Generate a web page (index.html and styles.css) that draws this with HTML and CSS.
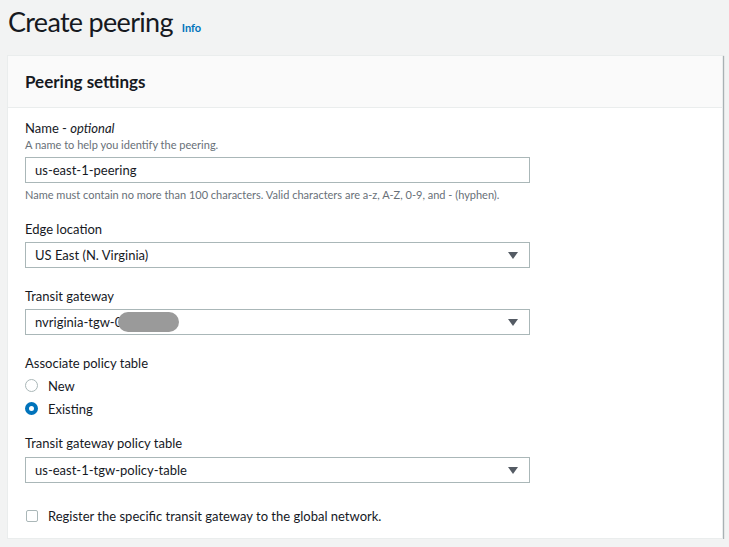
FILE: index.html
```html
<!DOCTYPE html>
<html lang="en">
<head>
    <meta charset="UTF-8" />
    <title>Create peering</title>
    <link rel="stylesheet" href="styles.css">
</head>
<body>
    <div class="page-title">
        <h1>Create peering</h1>
        <a class="info-link" href="#">Info</a>
    </div>

    <div class="panel">
        <div class="panel-header">Peering settings</div>
        <div class="panel-body">
            <!-- Name -->
            <div class="field field-first">
                <div class="field-label">Name - <i>optional</i></div>
                <div class="field-desc">A name to help you identify the peering.</div>
                <div class="input">us-east-1-peering</div>
                <div class="field-hint">Name must contain no more than 100 characters. Valid characters are a-z, A-Z, 0-9, and - (hyphen).</div>
            </div>
            <!-- Edge location -->
            <div class="field field-tight">
                <div class="field-label">Edge location</div>
                <div class="select">US East (N. Virginia)<span class="caret"></span></div>
            </div>
            <!-- Transit gateway -->
            <div class="field">
                <div class="field-label">Transit gateway</div>
                <div class="select">nvriginia-tgw-0<span class="redact"></span><span class="caret"></span></div>
            </div>
            <!-- Policy table choice -->
            <div class="field">
                <div class="field-label">Associate policy table</div>
                <div class="radio-group">
                    <div class="radio-row"><span class="radio"></span>New</div>
                    <div class="radio-row"><span class="radio checked"></span>Existing</div>
                </div>
            </div>
            <div class="field field-after-radio">
                <div class="field-label">Transit gateway policy table</div>
                <div class="select select-low">us-east-1-tgw-policy-table<span class="caret"></span></div>
            </div>
            <div class="check-row">
                <span class="checkbox"></span>Register the specific transit gateway to the global network.
            </div>
        </div>
    </div>
</body>
</html>
```

FILE: styles.css
```css
body {
    margin: 0;
    background-color: #f2f3f3;
    font-family: Lato, 'Open Sans', sans-serif;
    color: #16191f;
}
.page-title {
    display: flex;
    align-items: baseline;
    padding: 2px 8px 0;
    height: 55px;
    box-sizing: border-box;
}
.page-title h1 {
    margin: 0;
    font-size: 27px;
    font-weight: 400;
    letter-spacing: -0.7px;
    line-height: 40px;
}
.info-link {
    margin-left: 9px;
    font-size: 11px;
    font-weight: 700;
    color: #0073bb;
    text-decoration: none;
}
.panel {
    margin-left: 7px;
    width: 714px;
    background-color: #fff;
    border: 1px solid #eaeded;
    box-shadow: 1px 1px 1px rgba(0, 28, 36, 0.3);
}
.panel-header {
    height: 51px;
    display: flex;
    align-items: center;
    padding: 0 17px;
    background-color: #fafafa;
    border-bottom: 1px solid #eaeded;
    font-size: 17px;
    font-weight: 700;
}
.panel-body {
    padding: 11px 17px 11px;
}
.field {
    margin-top: 19px;
}
.field-first {
    margin-top: 0;
}
.field-tight {
    margin-top: 17px;
}
.field-after-radio {
    margin-top: 14px;
}
.field-label {
    font-size: 13px;
    line-height: 18px;
}
.field-desc, .field-hint {
    font-size: 11px;
    line-height: 16px;
    color: #687078;
}
.field-desc {
    margin-bottom: 2px;
}
.field-hint {
    margin-top: 4px;
}
.input, .select {
    position: relative;
    width: 505px;
    height: 26px;
    box-sizing: border-box;
    border: 1px solid #aab7b8;
    padding: 0 9px;
    font-size: 13px;
    line-height: 24px;
    margin-top: 4px;
}
.select-low {
    margin-top: 5px;
}
.caret {
    position: absolute;
    right: 11px;
    top: 9px;
    width: 0;
    height: 0;
    border-left: 5px solid transparent;
    border-right: 5px solid transparent;
    border-top: 7px solid #545b64;
}
.redact {
    position: absolute;
    left: 92px;
    top: 2px;
    width: 61px;
    height: 20px;
    border-radius: 10px;
    background-color: #9a9a9a;
}
.radio-group {
    margin-top: 2px;
}
.radio-row, .check-row {
    display: flex;
    align-items: center;
    font-size: 13px;
    height: 23px;
}
.radio {
    width: 11px;
    height: 11px;
    border: 1px solid #aab7b8;
    border-radius: 50%;
    margin: 0 10px 0 0;
}
.radio.checked {
    width: 5px;
    height: 5px;
    border: 4px solid #0073bb;
}
.check-row {
    margin-top: 21px;
}
.checkbox {
    width: 10px;
    height: 10px;
    border: 1px solid #aab7b8;
    border-radius: 2px;
    margin: 0 10px 0 1px;
}
```
